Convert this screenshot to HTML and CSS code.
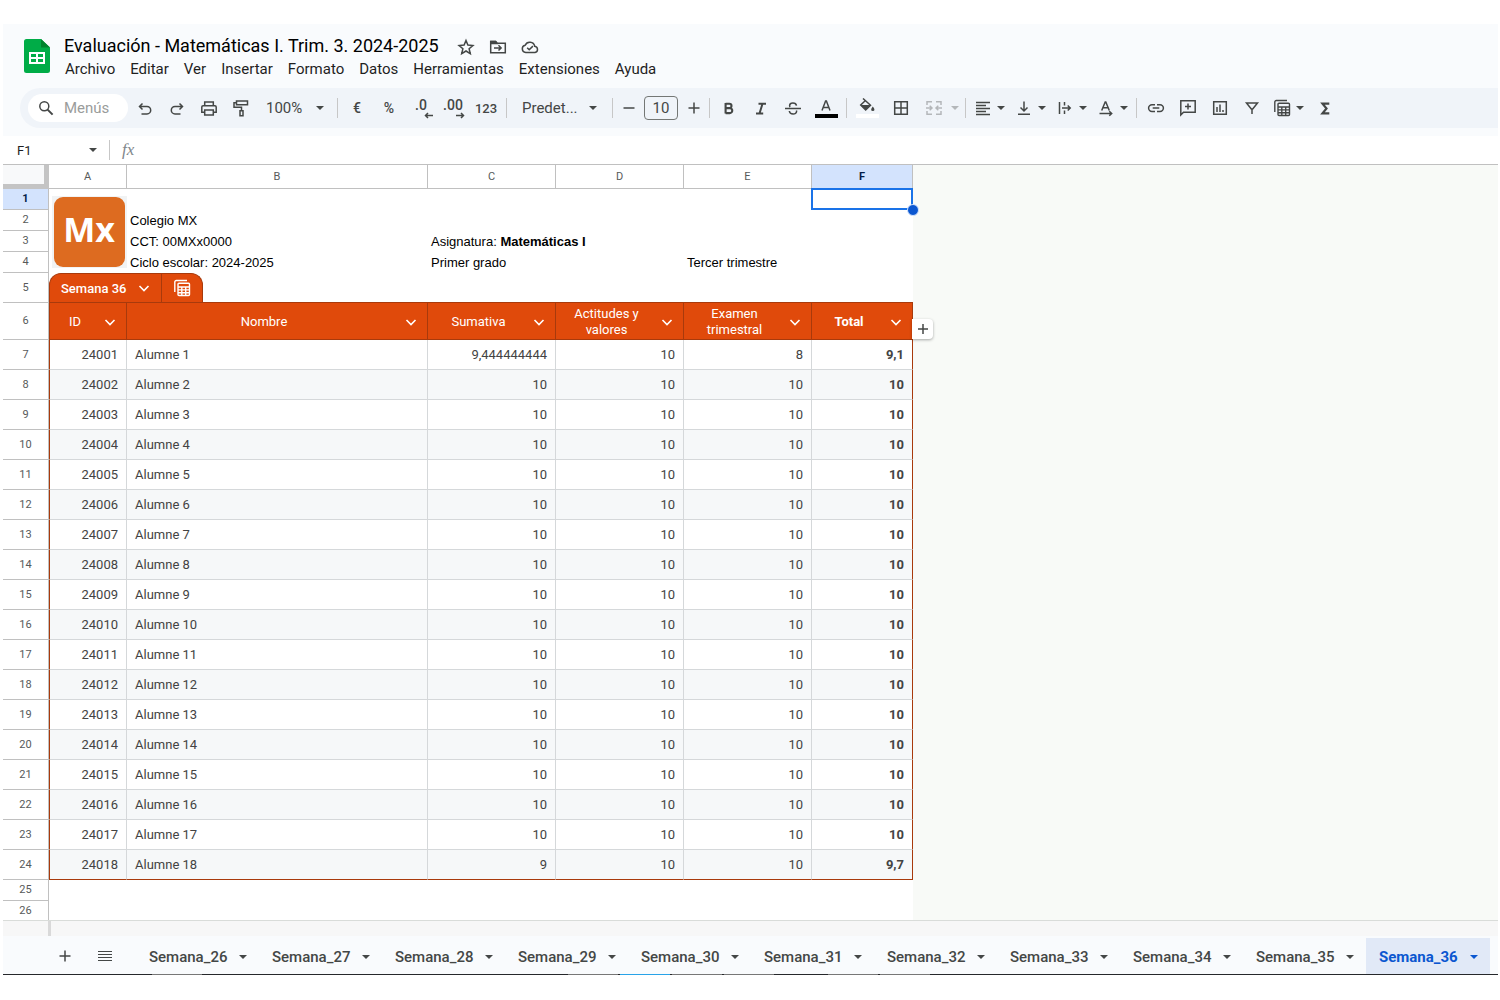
FILE: index.html
```html
<!DOCTYPE html>
<html lang="es">
<head>
<meta charset="utf-8">
<title>Evaluación - Matemáticas I. Trim. 3. 2024-2025</title>
<link rel="stylesheet" href="styles.css">
</head>
<body>
<svg class="defs" aria-hidden="true">
  <symbol id="caret" viewBox="0 0 10 10"><path d="M1 3h8L5 7z" fill="currentColor"/></symbol>
  <symbol id="chev" viewBox="0 0 12 12"><path d="M1.500 4L6 8.500 10.500 4" fill="none" stroke="currentColor" stroke-width="1.6"/></symbol>
  <symbol id="tviews" viewBox="0 0 18 18"><path d="M1.8 13V3a1.5 1.5 0 0 1 1.5-1.500H14M5 5.300a1 1 0 0 1 1-1h9.500a1 1 0 0 1 1 1v10.200a1 1 0 0 1-1 1H6a1 1 0 0 1-1-1zM5 8h11.500M5 10.900h11.500M5 13.700h11.500M8.800 8v8.500M12.700 8v8.500" fill="none" stroke="currentColor" stroke-width="1.4"/></symbol>
</svg>
<div class="app">
<header class="top">
  <div class="titlebar">
    <svg class="logo" viewBox="0 0 26 34" role="img" aria-label="Hojas de cálculo"><path d="M2.500 0H17l9 8.500V31.500a2.500 2.500 0 0 1-2.500 2.500h-21A2.500 2.500 0 0 1 0 31.500v-29A2.500 2.500 0 0 1 2.500 0z" fill="#00ac47"/><path d="M17 0l9 8.500h-9z" fill="#00832d"/><path d="M5 13h16v12H5zM7 15v3h5v-3zm7 0v3h5v-3zm-7 5v3h5v-3zm7 0v3h5v-3z" fill="#fff" fill-rule="evenodd"/></svg>
    <div class="titles">
      <div class="name">
        <h1>Evaluación - Matemáticas I. Trim. 3. 2024-2025</h1>
        <button class="mini" aria-label="Destacar"><svg viewBox="0 0 18 18"><path d="M9 2.500l1.900 4.600 5 .4-3.800 3.200 1.200 4.900L9 13l-4.300 2.600 1.200-4.900-3.800-3.200 5-.4z"/></svg></button>
        <button class="mini" aria-label="Mover"><svg viewBox="0 0 18 18"><path d="M1.700 3.500h5l1.600 1.700h8v9.500H1.700zM5 9.900h7M9.500 7.300l2.600 2.600-2.600 2.600"/><path d="M2 3.500h4.500l1.500 2H2z" fill="currentColor"/></svg></button>
        <button class="mini" aria-label="Estado del documento"><svg viewBox="0 0 18 18"><path d="M4.700 14.500a3.700 3.700 0 0 1-.5-7.300 5 5 0 0 1 9.500 1 3.200 3.200 0 0 1 .3 6.300zM6.200 9.800l2 2 3.700-3.700"/></svg></button>
      </div>
      <nav class="menus"><button>Archivo</button><button>Editar</button><button>Ver</button><button>Insertar</button><button>Formato</button><button>Datos</button><button>Herramientas</button><button>Extensiones</button><button>Ayuda</button></nav>
    </div>
  </div>
  <div class="toolbar" role="toolbar">
    <label class="search"><svg viewBox="0 0 18 18"><circle cx="7.300" cy="7.300" r="4.500"/><path d="M10.600 10.600l5 5" stroke-width="2"/></svg><input type="text" placeholder="Menús" aria-label="Menús"></label>
    <button class="b" aria-label="Deshacer"><svg viewBox="0 0 18 18"><path d="M6.500 4.500L3.500 7.500l3 3M3.500 7.500H11a3.500 3.500 0 0 1 0 7.400H5.500"/></svg></button>
    <button class="b" aria-label="Rehacer"><svg viewBox="0 0 18 18"><path d="M11.500 4.500l3 3-3 3M14.500 7.500H7a3.500 3.500 0 0 0 0 7.400h5.500"/></svg></button>
    <button class="b" aria-label="Imprimir"><svg viewBox="0 0 18 18"><path d="M4.700 6.500V3h8.600v3.500M4.700 13.300H1.800V8q0-1.300 1.300-1.300h11.800q1.300 0 1.300 1.300v5.300h-2.900M4.700 11h8.600v5H4.700z"/></svg></button>
    <button class="b" aria-label="Copiar formato"><svg viewBox="0 0 18 18"><path d="M4.500 1.900h11v3.800h-11zM4.500 3.700H2V8.200h7.500v3M8 11.800h3v5H8z"/></svg></button>
    <label class="pick zoom"><select aria-label="Zoom"><option>100%</option></select><svg class="car"><use href="#caret"/></svg></label>
    <i class="sep"></i>
    <button class="b t">€</button><button class="b t">%</button>
    <button class="b dec" aria-label="Reducir decimales"><span>.0</span><svg viewBox="0 0 9 7"><path d="M9 3.500H2M4 1L1.500 3.500 4 6"/></svg></button>
    <button class="b dec" aria-label="Aumentar decimales"><span>.00</span><svg viewBox="0 0 9 7"><path d="M0 3.500h7M5 1l2.500 2.500L5 6"/></svg></button>
    <button class="b w t n">123</button>
    <i class="sep"></i>
    <label class="pick font"><select aria-label="Fuente"><option>Predet...</option></select><svg class="car"><use href="#caret"/></svg></label>
    <i class="sep"></i>
    <button class="b s" aria-label="Reducir tamaño"><svg viewBox="0 0 18 18"><path d="M3.500 9h11"/></svg></button>
    <input class="size" type="text" value="10" aria-label="Tamaño de fuente">
    <button class="b s" aria-label="Aumentar tamaño"><svg viewBox="0 0 18 18"><path d="M3.500 9h11M9 3.500v11"/></svg></button>
    <i class="sep"></i>
    <button class="b" aria-label="Negrita"><svg viewBox="0 0 18 18"><path d="M5.600 4v10.500M5.600 4.700h3.700a2.200 2.200 0 0 1 0 4.400H5.600M5.600 9.200h4.200a2.400 2.400 0 0 1 0 4.900H5.600" stroke-width="2.100"/></svg></button>
    <button class="b" aria-label="Cursiva"><svg viewBox="0 0 18 18"><path d="M6.500 4.700H14M4 14.500h7.200M10.500 4.700l-3 9.800" stroke-width="2"/></svg></button>
    <button class="b" aria-label="Tachado"><svg viewBox="0 0 18 18"><path d="M1 9.500h16M12.500 6.700C12 3 5.800 3.100 5.600 6.500q0 .9.500 1.500M5.300 12c.5 4 7.300 3.800 7.300.3q0-.4-.2-.8"/></svg></button>
    <button class="b w color" aria-label="Color del texto"><svg viewBox="0 0 18 18"><path d="M5 12.500L8.600 3h.8L13 12.500M6.300 9.500h5.400"/></svg></button>
    <i class="sep"></i>
    <button class="b w color fill" aria-label="Color de relleno"><svg viewBox="0 0 18 18"><path d="M5 .5l7.500 6.800-4.800 4.700-5-5 4.500-4.200"/><path d="M2.800 7h9.500l-4.600 5zM14.800 8.500q-3.300 4.200 0 4.500 3.300-.3 0-4.500z" fill="currentColor" stroke="none"/></svg></button>
    <button class="b w" aria-label="Bordes"><svg viewBox="0 0 18 18"><path d="M2.700 2.700h12.600v12.600H2.700zM9 2.700v12.600M2.700 9h12.600"/></svg></button>
    <button class="dd off" aria-label="Combinar celdas"><svg viewBox="0 0 18 18"><path d="M7 2.700H2V6M11 2.700h5V6M7 15.300H2V12M11 15.300h5V12M1 9h6M4.700 6.700L7 9l-2.300 2.300M17 9h-6M13.300 6.700L11 9l2.300 2.300"/></svg><svg class="car"><use href="#caret"/></svg></button>
    <i class="sep"></i>
    <button class="dd" aria-label="Alineación horizontal"><svg viewBox="0 0 18 18"><path d="M2 3.500h14M2 6.500h10M2 9.500h14M2 12.500h10M2 15.500h14" stroke-width="1.300"/></svg><svg class="car"><use href="#caret"/></svg></button>
    <button class="dd" aria-label="Alineación vertical"><svg viewBox="0 0 18 18"><path d="M3 15.300h12M9 2.500v9.500M5.500 8.500L9 12l3.500-3.500"/></svg><svg class="car"><use href="#caret"/></svg></button>
    <button class="dd" aria-label="Ajuste de texto"><svg viewBox="0 0 18 18"><path d="M3.500 3v12M8.500 3v3.500M8.500 11.500V15M6 9h8M11.700 6.500L14.200 9l-2.500 2.500"/></svg><svg class="car"><use href="#caret"/></svg></button>
    <button class="dd" aria-label="Rotación de texto"><svg viewBox="0 0 18 18"><path d="M4.700 11.500L8.200 3h.6l3.500 8.500M6 8.700h5M2.500 14.500h12M12.300 12.200l2.400 2.300-2.400 2.300"/></svg><svg class="car"><use href="#caret"/></svg></button>
    <i class="sep"></i>
    <button class="b" aria-label="Insertar enlace"><svg viewBox="0 0 18 18"><path d="M8 5.700H5a3.400 3.400 0 0 0 0 6.800h3M10 5.700h3a3.400 3.400 0 0 1 0 6.800h-3M5.700 9.100h6.600"/></svg></button>
    <button class="b" aria-label="Comentario"><svg viewBox="0 0 18 18"><path d="M1.800 16V1.800h14.400v11.400H4.500zM9 4.500v6M6 7.500h6"/></svg></button>
    <button class="b" aria-label="Gráfico"><svg viewBox="0 0 18 18"><path d="M2.700 2.700h12.600v12.600H2.700zM6 13V8M9 13V5.500M12 13v-2"/></svg></button>
    <button class="b" aria-label="Filtro"><svg viewBox="0 0 18 18"><path d="M3.500 4h11L9.700 10h-1.400zM9 9.500V15" /></svg></button>
    <button class="dd" aria-label="Vistas de tabla"><svg><use href="#tviews"/></svg><svg class="car"><use href="#caret"/></svg></button>
    <button class="b" aria-label="Funciones"><svg viewBox="0 0 18 18"><path d="M13.300 4.700H6.500L10.500 9.500l-4 4.800h6.800" stroke-width="2.200"/></svg></button>
  </div>
</header>
<div class="formula">
  <label class="namebox"><input type="text" value="F1" aria-label="Cuadro de nombres"><svg class="car"><use href="#caret"/></svg></label>
  <i class="sep"></i><span class="fx">fx</span>
  <input class="expr" type="text" aria-label="Fórmula">
</div>
<main class="sheet">
<table class="grid">
  <colgroup><col class="c0"><col class="ca"><col class="cb"><col class="cn"><col class="cn"><col class="cn"><col class="cf"></colgroup>
  <thead><tr><th class="corner"></th><th>A</th><th>B</th><th>C</th><th>D</th><th>E</th><th class="sel">F</th></tr></thead>
  <tbody id="rows">
  <tr class="free"><th class="sel">1</th><td class="pic"><svg class="badge" viewBox="0 0 75 72" role="img" aria-label="Mx"><path d="M0 0h75v72H0z" fill="#f1f3f4"/><rect x="2" y="1" width="71" height="70" rx="9" fill="#dd6b20"/><text x="37" y="46" text-anchor="middle">Mx</text></svg></td><td></td><td></td><td></td><td></td><td class="active"></td></tr>
  <tr class="free"><th>2</th><td></td><td>Colegio MX</td><td></td><td></td><td></td><td></td></tr>
  <tr class="free"><th>3</th><td></td><td>CCT: 00MXx0000</td><td colspan="2">Asignatura: <b>Matemáticas I</b></td><td></td><td></td></tr>
  <tr class="free"><th>4</th><td></td><td>Ciclo escolar: 2024-2025</td><td>Primer grado</td><td></td><td>Tercer trimestre</td><td></td></tr>
  <tr class="tabrow"><th>5</th><td colspan="6"><div class="chip"><button class="chipname">Semana 36 <svg class="chev"><use href="#chev"/></svg></button><button class="chipview" aria-label="Vistas"><svg><use href="#tviews"/></svg></button></div></td></tr>
  <tr class="heads"><th>6</th>
    <td><div><span>ID</span><svg class="chev"><use href="#chev"/></svg></div></td>
    <td><div><span>Nombre</span><svg class="chev"><use href="#chev"/></svg></div></td>
    <td><div><span>Sumativa</span><svg class="chev"><use href="#chev"/></svg></div></td>
    <td><div><span>Actitudes y valores</span><svg class="chev"><use href="#chev"/></svg></div></td>
    <td><div><span>Examen trimestral</span><svg class="chev"><use href="#chev"/></svg></div></td>
    <td class="last"><div><span><b>Total</b></span><svg class="chev"><use href="#chev"/></svg></div><button class="add" aria-label="Añadir columna"><svg viewBox="0 0 12 12"><path d="M1 6h10M6 1v10"/></svg></button></td></tr>
  </tbody>
</table>
</main>
<div class="scroll"></div>
<footer class="tabs" id="tabs">
  <button class="tool" aria-label="Añadir hoja"><svg viewBox="0 0 18 18"><path d="M3.500 9h11M9 3.500v11"/></svg></button>
  <button class="tool" aria-label="Todas las hojas"><svg viewBox="0 0 18 18"><path d="M2 4.500h14M2 7.500h14M2 10.500h14M2 13.500h14" stroke-width="1.200"/></svg></button>
</footer>
<div class="edge"><i class="e1"></i><i></i><i class="e3"></i><i></i><i></i><i class="e6"></i><i></i></div>
</div>
<script src="sheet.js"></script>
</body>
</html>
```
FILE: styles.css
```css
* { box-sizing: border-box; }
body { margin: 0; background: #fff; font-family: Roboto, "Liberation Sans", sans-serif; color: #444746; }
button, input, select { font: inherit; color: inherit; border: 0; padding: 0; margin: 0; background: none; outline: 0; }
svg { width: 18px; height: 18px; flex: none; fill: none; stroke: currentColor; stroke-width: 1.5px; }
.defs { display: none; }
.car { width: 10px; height: 10px; stroke: none; }
.chev { width: 12px; height: 12px; }
.app { padding: 24px 2px 0 3px; }
.top { background: #f9fbfd; padding: 8px 0; }
.titlebar { display: flex; padding: 0 21px; gap: 14px; }
.logo { width: 26px; height: 34px; margin-top: 7px; stroke: none; }
.name { display: flex; align-items: center; height: 27px; }
h1 { font-size: 18px; line-height: 24px; font-weight: 400; margin: 0 11px 0 0; color: #000; }
.mini { width: 32px; height: 28px; display: grid; place-items: center; padding-top: 2px; }
.menus { display: flex; gap: 15px; padding-left: 1px; height: 21px; }
.menus button { font-size: 15px; line-height: 18px; height: 19px; color: #1f1f1f; }
.toolbar { display: flex; align-items: center; height: 40px; margin-left: 17px; padding-left: 8px; background: #f0f4f9; border-radius: 20px 0 0 20px; margin-top: 8px; }
.search { display: flex; align-items: center; gap: 9px; width: 100px; height: 28px; margin-right: 1px; padding-left: 9px; background: #fff; border-radius: 14px; }
.search input { width: 60px; font-size: 15px; }
.search input::placeholder { color: #9a9c9b; opacity: 1; }
.b { width: 32px; height: 28px; display: grid; place-items: center; flex: none; }
.b.w { width: 34px; }
.b.s { width: 25px; }
.b.t { font-size: 14px; font-weight: 500; }
.b.n { font-size: 13px; }
.pick { display: flex; align-items: center; flex: none; }
.pick select { appearance: none; font-size: 15px; height: 28px; }
.zoom { width: 77px; padding-left: 9px; }
.zoom select { width: 49px; }
.font { width: 99px; padding-left: 12px; }
.font select { width: 66px; }
.sep { width: 1px; height: 20px; background: #c7c7c7; margin: 0 3px; flex: none; }
.dec { font-size: 14px; font-weight: 500; line-height: 14px; align-content: center; justify-items: stretch; }
.dec span { text-align: center; }
.dec svg { width: 9px; height: 7px; justify-self: end; margin-right: 4px; }
.size { width: 34px; height: 24px; margin: 0 3px; border: 1px solid #747775; border-radius: 4px; text-align: center; font-size: 15px; flex: none; }
.color { align-content: center; }
.color svg { height: 18px; }
.color::after { content: ""; width: 23px; height: 4px; background: #000; margin-top: -2px; }
.color.fill::after { background: #fff; }
.dd { display: flex; align-items: center; gap: 4px; width: 41px; height: 28px; padding-left: 5px; flex: none; }
.dd.off { width: 44px; padding-left: 7px; gap: 7px; color: #b4b7ba; }
.formula { display: flex; align-items: center; height: 29px; border-bottom: 1px solid #c0c0c0; }
.namebox { display: flex; align-items: center; width: 103px; padding-left: 14px; }
.namebox input { width: 71px; font-size: 13px; color: #1f1f1f; }
.fx { font: italic 17px "Liberation Serif", serif; color: #80868b; margin-left: 9px; width: 20px; }
.expr { flex: 1; }
.sheet { background: #f8faf7; overflow: hidden; }
.grid { border-collapse: separate; border-spacing: 0; table-layout: fixed; width: 910px; background: #fff; }
.c0 { width: 46px; } .ca { width: 78px; } .cb { width: 301px; } .cn { width: 128px; } .cf { width: 101px; }
.grid th { font-size: 11px; font-weight: 400; color: #575a5a; padding: 0; border: solid #c0c0c0; border-width: 0 1px 1px 0; line-height: 12px; }
.grid thead th { height: 24px; }
.grid .sel { background: #d3e3fd; color: #041e49; font-weight: 700; }
.grid .corner { background: #f8f9fa; border-width: 0 5px 5px 0; border-color: #c4c4c4; }
.free th, .free td { height: 21px; }
.free td { font: 13px/16px "Liberation Sans", Arial, sans-serif; color: #000; padding: 0 3px; white-space: nowrap; }
.free.cut th, .free.cut td { height: 19px; border-bottom: 0; }
.pic, .active, .last { position: relative; }
.badge { position: absolute; left: 3px; top: 7px; width: 75px; height: 72px; stroke: none; }
.badge text { font: bold 34px "Open Sans", sans-serif; fill: #fff; }
.active::before { content: ""; position: absolute; inset: -1px 0 0 -1px; border: 2px solid #1a73e8; }
.active::after { content: ""; position: absolute; right: -6px; bottom: -6px; width: 10px; height: 10px; border-radius: 50%; background: #0b57d0; border: 1px solid #d3e3fd; z-index: 1; }
.tabrow td { height: 30px; padding: 0; border-bottom: 1px solid #a83a0c; }
.chip { display: flex; width: 154px; height: 29px; background: #e04a0b; border: 1px solid #a83a0c; border-bottom: 0; border-radius: 12px 12px 0 0; color: #fff; }
.chipname { display: flex; align-items: center; gap: 12px; width: 112px; padding-left: 11px; border-right: 1px solid #a83a0c; font-size: 13px; font-weight: 500; white-space: nowrap; }
.chipview { flex: 1; display: grid; place-items: center; }
.heads td { height: 37px; padding: 1px 0 0; background: #e04a0b; color: #fff; border: solid #a83a0c; border-width: 0 1px 1px 0; }
.heads div { display: flex; align-items: center; padding-right: 10px; }
.heads span { flex: 1; text-align: center; font-size: 13px; line-height: 16px; padding: 0 8px 0 4px; }
.heads td:nth-child(2), .data td:nth-child(2) { border-left: 1px solid #a83a0c; }
.add { position: absolute; left: 100%; bottom: 0; width: 21px; height: 20px; background: #fff; border-radius: 0 4px 4px 0; box-shadow: 0 1px 3px #0005; display: grid; place-items: center; color: #444746; }
.add svg { width: 12px; height: 12px; }
.data td { height: 30px; padding: 0 8px; font-size: 13px; line-height: 16px; text-align: right; color: #434343; border: solid #d5d8da; border-width: 0 1px 1px 0; }
.data.alt td { background: #f6f8f9; }
.data td:nth-child(3) { text-align: left; }
.data td:last-child { font-weight: 700; border-right-color: #a83a0c; }
.data.end td { border-bottom-color: #a83a0c; }
.scroll { height: 16px; background: linear-gradient(90deg, transparent 45px, #d9d9d9 45px, #d9d9d9 48px, transparent 48px) #f7f7f7; border-top: 1px solid #d9dcd9; }
.tabs { display: flex; height: 38px; padding: 2px 0 0 42px; background: #f9fbfd; }
.tool { width: 40px; display: grid; place-items: center; }
.tool:nth-child(2) { margin-right: 11px; }
.tab { display: flex; align-items: center; justify-content: space-between; width: 123px; padding: 2px 11px 0 13px; font-size: 15px; font-weight: 500; flex: none; }
.tab.on { width: 124px; background: #e1e9f7; color: #0b57d0; font-weight: 700; }
.edge { display: flex; height: 1px; background: #26282b; }
.edge i { width: 50px; margin-right: 2px; background: #777; }
.edge .e1 { margin: 0 366px 0 149px; }
.edge .e3 { background: #29a3e8; }
.edge .e6 { margin-left: 52px; }
```
FILE: sheet.js
```js
const rows = document.getElementById('rows');
const addRow = (n, cls, cells) => {
  const tr = rows.insertRow();
  tr.className = cls;
  const th = document.createElement('th');
  th.textContent = n;
  tr.append(th);
  cells.forEach(c => { tr.insertCell().textContent = c; });
};
for (let i = 1; i <= 18; i++) {
  const sum = i === 1 ? '9,444444444' : i === 18 ? '9' : '10';
  const exam = i === 1 ? '8' : '10';
  const total = i === 1 ? '9,1' : i === 18 ? '9,7' : '10';
  addRow(i + 6, 'data' + (i % 2 ? '' : ' alt') + (i === 18 ? ' end' : ''),
    [24000 + i, 'Alumne ' + i, sum, '10', exam, total]);
}
addRow(25, 'free', ['', '', '', '', '', '']);
addRow(26, 'free cut', ['', '', '', '', '', '']);

const tabs = document.getElementById('tabs');
for (let n = 26; n <= 36; n++) {
  const b = document.createElement('button');
  b.className = 'tab' + (n === 36 ? ' on' : '');
  b.innerHTML = 'Semana_' + n + '<svg class="car"><use href="#caret"/></svg>';
  tabs.append(b);
}
```
